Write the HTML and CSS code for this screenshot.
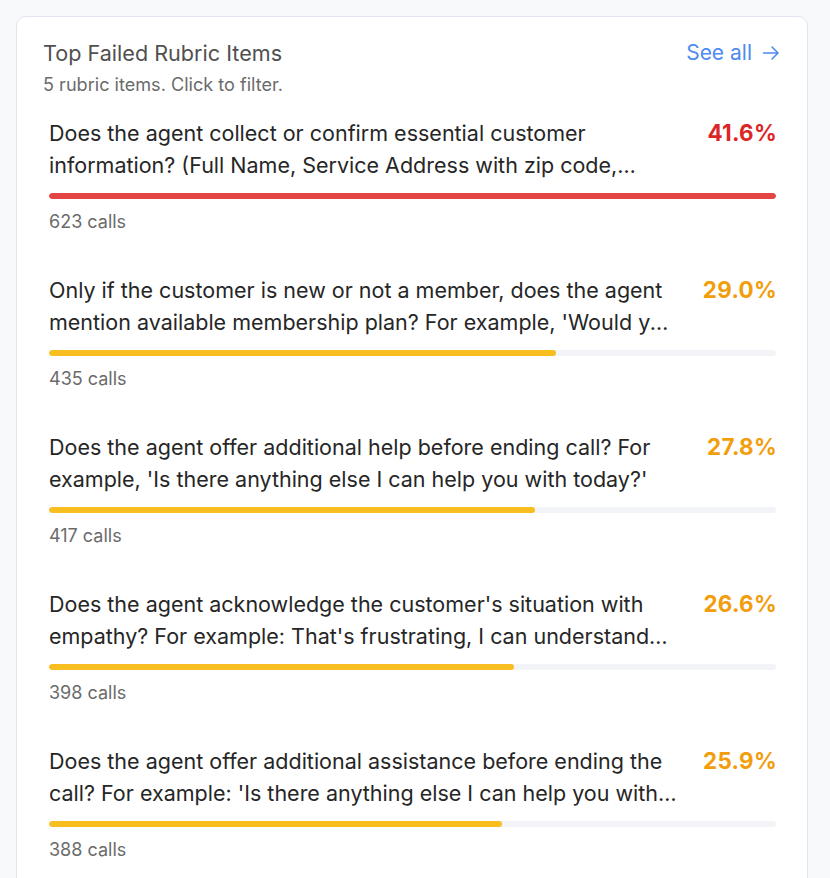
FILE: index.html
```html
<!DOCTYPE html>
<html lang="en">
<head>
<meta charset="utf-8">
<title>Top Failed Rubric Items</title>
<link rel="stylesheet" href="styles.css">
</head>
<body>
<section class="card">
  <header class="card-header">
    <div class="heading">
      <h2 class="title">Top Failed Rubric Items</h2>
      <p class="subtitle">5 rubric items. Click to filter.</p>
    </div>
    <a class="see-all" href="#">See all
      <svg class="arrow" viewBox="0 0 20 20" width="20" height="20" aria-hidden="true">
        <path d="M2.5 10h14.5M11 4l6 6-6 6" fill="none" stroke="currentColor" stroke-width="1.6" stroke-linecap="round" stroke-linejoin="round"/>
      </svg>
    </a>
  </header>
  <ul class="items">
    <li class="item">
      <div class="item-top">
        <p class="item-text">Does the agent collect or confirm essential customer information? (Full Name, Service Address with zip code, Phone Number, Email Address)</p>
        <span class="pct pct-red">41.6%</span>
      </div>
      <div class="track"><div class="fill fill-red" style="width:100%"></div></div>
      <div class="calls">623 calls</div>
    </li>
    <li class="item">
      <div class="item-top">
        <p class="item-text">Only if the customer is new or not a member, does the agent mention available membership plan? For example, 'Would you like to hear about our membership plan?'</p>
        <span class="pct pct-amber">29.0%</span>
      </div>
      <div class="track"><div class="fill fill-amber" style="width:69.7%"></div></div>
      <div class="calls">435 calls</div>
    </li>
    <li class="item">
      <div class="item-top">
        <p class="item-text">Does the agent offer additional help before ending call? For example, 'Is there anything else I can help you with today?'</p>
        <span class="pct pct-amber">27.8%</span>
      </div>
      <div class="track"><div class="fill fill-amber" style="width:66.8%"></div></div>
      <div class="calls">417 calls</div>
    </li>
    <li class="item">
      <div class="item-top">
        <p class="item-text">Does the agent acknowledge the customer's situation with empathy? For example: That's frustrating, I can understand how that feels.</p>
        <span class="pct pct-amber">26.6%</span>
      </div>
      <div class="track"><div class="fill fill-amber" style="width:63.9%"></div></div>
      <div class="calls">398 calls</div>
    </li>
    <li class="item">
      <div class="item-top">
        <p class="item-text">Does the agent offer additional assistance before ending the call? For example: 'Is there anything else I can help you with today?'</p>
        <span class="pct pct-amber">25.9%</span>
      </div>
      <div class="track"><div class="fill fill-amber" style="width:62.3%"></div></div>
      <div class="calls">388 calls</div>
    </li>
  </ul>
</section>
</body>
</html>
```

FILE: styles.css
```css
* { box-sizing: border-box; }

html, body {
  margin: 0;
  padding: 0;
  background: #f8f9fb;
  font-family: Inter, "Noto Sans", "Liberation Sans", sans-serif;
}

body {
  padding: 16px 22px 0 16px;
}

.card {
  background: #ffffff;
  border: 1px solid #e3e6ee;
  border-radius: 10px;
  padding: 22px 26px 40px 26px;
}

.card-header {
  display: flex;
  justify-content: space-between;
  align-items: flex-start;
}

.title {
  margin: 0;
  font-size: 21.6px;
  line-height: 28px;
  font-weight: 400;
  color: #505050;
}

.subtitle {
  margin: 6px 0 0;
  font-size: 18.1px;
  line-height: 22px;
  color: #6b6b6b;
}

.see-all {
  display: flex;
  align-items: center;
  gap: 9px;
  font-size: 21px;
  line-height: 28px;
  color: #4f8bf0;
  text-decoration: none;
}

.arrow {
  display: block;
}

.items {
  list-style: none;
  margin: 16px 0 0;
  padding: 0;
  display: flex;
  flex-direction: column;
  gap: 29px;
}

.item {
  padding: 6px 5px 6px 6px;
  border-radius: 6px;
  cursor: pointer;
}

.item-top {
  display: flex;
  align-items: flex-start;
  gap: 22px;
}

.item-text {
  flex: 1;
  margin: 0;
  font-size: 21.5px;
  line-height: 32px;
  color: #262626;
  display: -webkit-box;
  -webkit-line-clamp: 2;
  -webkit-box-orient: vertical;
  overflow: hidden;
}

.pct {
  font-size: 22.4px;
  line-height: 32px;
  font-weight: 700;
  letter-spacing: 0.3px;
  margin-right: -1px;
  white-space: nowrap;
}

.pct-red { color: #dc2626; }
.pct-amber { color: #f29d0c; }

.track {
  margin-top: 12px;
  height: 6px;
  border-radius: 3px;
  background: #f3f4f8;
  overflow: hidden;
}

.fill {
  height: 100%;
  border-radius: 3px;
}

.fill-red { background: #e54444; }
.fill-amber { background: #f8be1f; }

.calls {
  margin-top: 12px;
  font-size: 18px;
  line-height: 22px;
  color: #6b6b6b;
}
```
